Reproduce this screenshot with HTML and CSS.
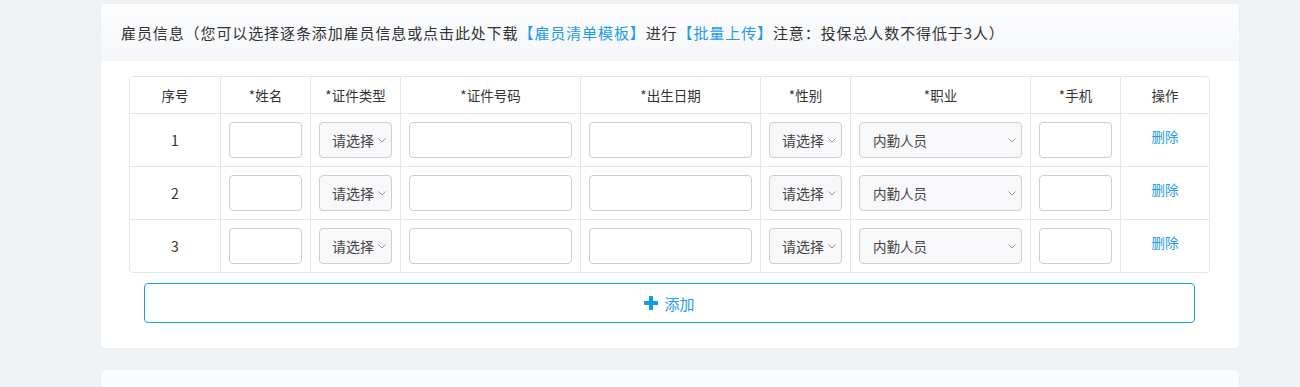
FILE: index.html
```html
<!DOCTYPE html>
<html lang="zh-CN">
<head>
  <meta charset="UTF-8">
  <title>雇员信息</title>
  <link rel="stylesheet" href="styles.css">
</head>
<body>
  <div class="card">
    <div class="card-head">
      雇员信息（您可以选择逐条添加雇员信息或点击此处下载<a class="link">【雇员清单模板】</a>进行<a class="link">【批量上传】</a>注意：投保总人数不得低于3人）
    </div>
    <div class="card-body">
      <table class="staff">
        <colgroup>
          <col style="width:91px"><col style="width:90px"><col style="width:90px"><col style="width:180px"><col style="width:180px"><col style="width:90px"><col style="width:180px"><col style="width:90px"><col style="width:88px">
        </colgroup>
        <thead>
          <tr>
            <th>序号</th><th>*姓名</th><th>*证件类型</th><th>*证件号码</th><th>*出生日期</th><th>*性别</th><th>*职业</th><th>*手机</th><th>操作</th>
          </tr>
        </thead>
        <tbody id="rows"></tbody>
      </table>
      <div class="add-btn">
        <svg width="14" height="14" viewBox="0 0 14 14"><path d="M5 0h4v5h5v4H9v5H5V9H0V5h5z" fill="#109ee9"/></svg>
        <span>添加</span>
      </div>
    </div>
  </div>
  <div class="card card-next"></div>

  <script>
    const chevron = '<svg width="8" height="5" viewBox="0 0 8 5"><path d="M0.5 0.5L4 4L7.5 0.5" fill="none" stroke="#999" stroke-width="1"/></svg>';
    const rows = document.getElementById('rows');
    for (let i = 1; i <= 3; i++) {
      rows.innerHTML += `
        <tr>
          <td>${i}</td>
          <td><div class="input"></div></td>
          <td><div class="select short"><span>请选择</span>${chevron}</div></td>
          <td><div class="input"></div></td>
          <td><div class="input"></div></td>
          <td><div class="select short"><span>请选择</span>${chevron}</div></td>
          <td><div class="select wide"><span>内勤人员</span>${chevron}</div></td>
          <td><div class="input"></div></td>
          <td><a class="link del">删除</a></td>
        </tr>`;
    }
  </script>
</body>
</html>
```

FILE: styles.css
```css
body {
  margin: 0;
  background-color: #eef2f5;
  font-family: "Noto Sans CJK SC", "Noto Sans", sans-serif;
  color: #333;
  padding: 4px 61px 0 101px;
  height: 383px;
  overflow: hidden;
}

.card {
  background: #fff;
  border-radius: 4px;
  box-shadow: 0 0 1px rgba(0, 0, 0, 0.08);
}

.card-head {
  height: 57px;
  line-height: 57px;
  padding-left: 20px;
  font-size: 15px;
  background: linear-gradient(to bottom, #fdfdfe, #f4f6f9);
  border-radius: 4px 4px 0 0;
  letter-spacing: 0.9px;
  white-space: nowrap;
}

.link {
  color: #1f9ce8;
  cursor: pointer;
}

.card-body {
  padding: 15px 29px 25px 28px;
}

.staff {
  width: 1081px;
  border-collapse: separate;
  border-spacing: 0;
  border: 1px solid #e3e7ec;
  border-radius: 4px;
  table-layout: fixed;
  font-size: 14px;
}

.staff th,
.staff td {
  border-right: 1px solid #e3e7ec;
  border-bottom: 1px solid #e3e7ec;
  text-align: center;
  padding: 0 8px;
}

.staff th:last-child,
.staff td:last-child {
  border-right: none;
}

.staff tbody tr:last-child td {
  border-bottom: none;
}

.staff th {
  height: 36px;
  font-weight: normal;
  font-size: 13.5px;
}

.staff td {
  height: 52px;
}

.input,
.select {
  box-sizing: border-box;
  height: 36px;
  border: 1px solid #cfcfd3;
  border-radius: 4px;
}

.select {
  background: #f8f8fa;
  display: flex;
  align-items: center;
  justify-content: space-between;
  font-size: 14px;
  color: #444;
  padding: 0 5px 0 12px;
}

.select.wide {
  font-size: 13.5px;
  padding-left: 13px;
}

.select svg {
  flex: none;
}

.del {
  font-size: 13.5px;
  display: block;
  margin-bottom: 9px;
}

.add-btn {
  margin: 10px 15px 0 15px;
  height: 38px;
  border: 1px solid #14a0ea;
  border-radius: 4px;
  display: flex;
  align-items: center;
  justify-content: center;
  gap: 6px;
  color: #1f9ce8;
  font-size: 15px;
}

.card-next {
  margin-top: 22px;
  height: 40px;
  background: #fafbfc;
}
```
